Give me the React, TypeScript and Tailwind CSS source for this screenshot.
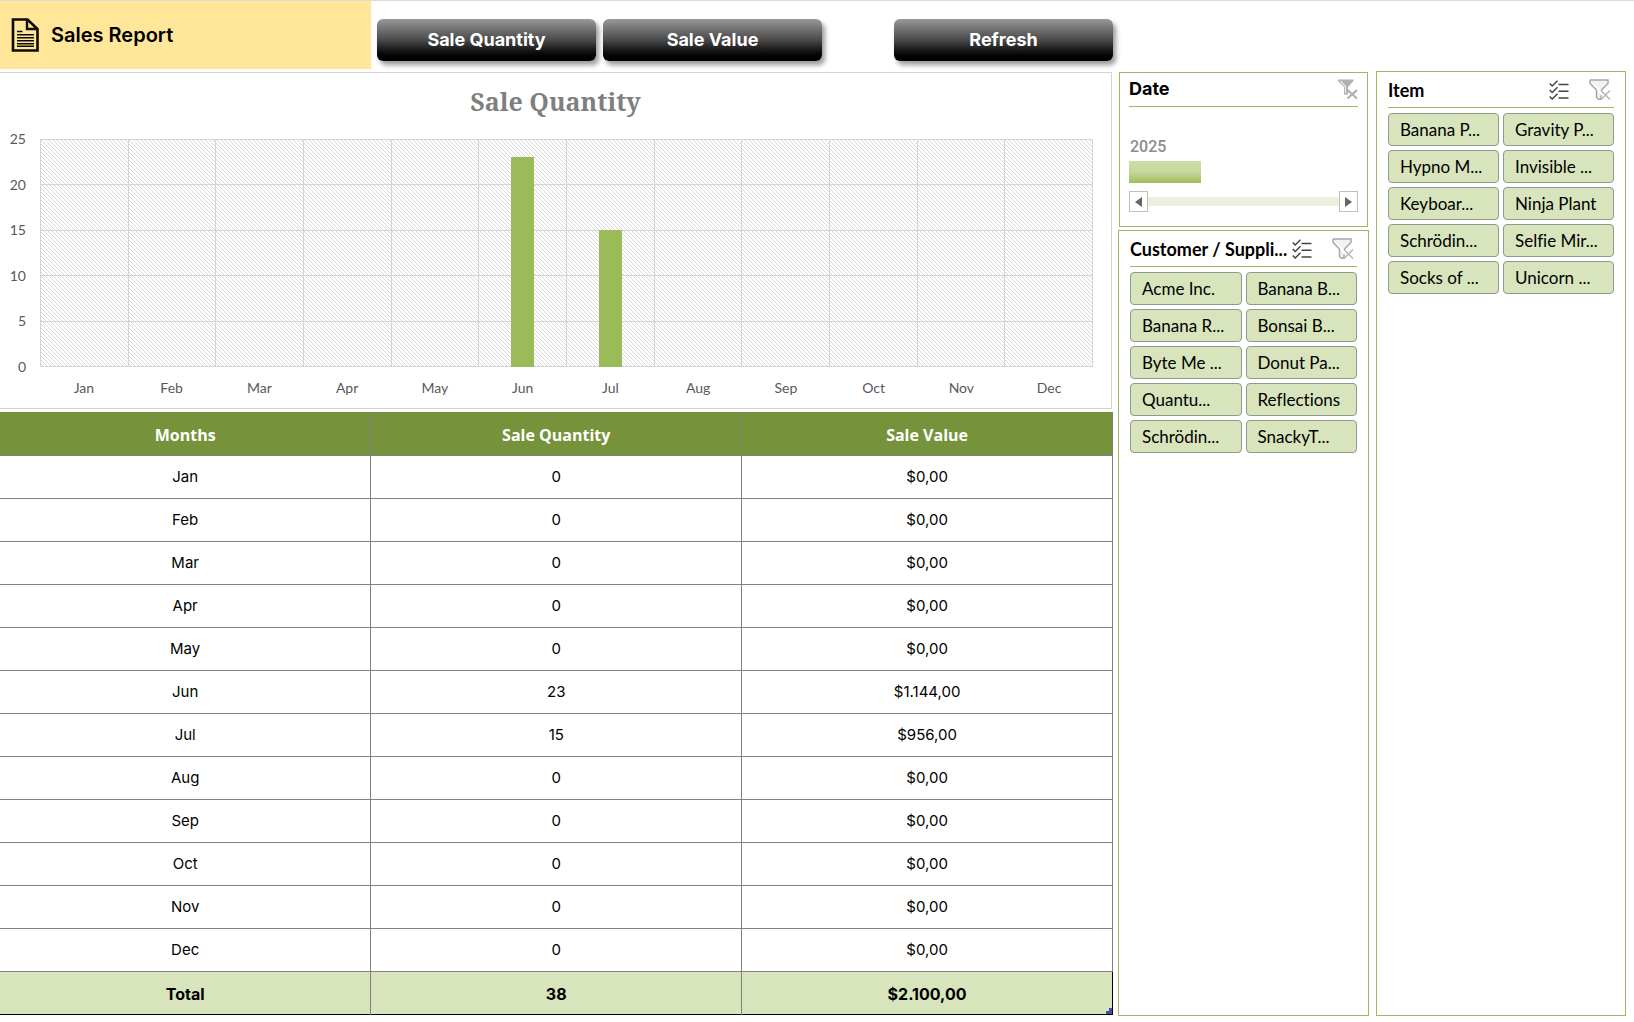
const months = ["Jan", "Feb", "Mar", "Apr", "May", "Jun", "Jul", "Aug", "Sep", "Oct", "Nov", "Dec"];

const sales: Record<string, { quantity: number; value: string }> = {
  Jun: { quantity: 23, value: "$1.144,00" },
  Jul: { quantity: 15, value: "$956,00" },
};

const ticks = [25, 20, 15, 10, 5, 0];

const customers = [
  "Acme Inc.",
  "Banana B...",
  "Banana R...",
  "Bonsai B...",
  "Byte Me ...",
  "Donut Pa...",
  "Quantu...",
  "Reflections",
  "Schrödin...",
  "SnackyT...",
];

const items = [
  "Banana P...",
  "Gravity P...",
  "Hypno M...",
  "Invisible ...",
  "Keyboar...",
  "Ninja Plant",
  "Schrödin...",
  "Selfie Mir...",
  "Socks of ...",
  "Unicorn ...",
];

function ReportIcon() {
  return (
    <svg width="28" height="34" viewBox="0 0 28 34" fill="none" stroke="#0d0a02" aria-hidden="true">
      <path d="M2 1.500h14.500l10 9.500v21.500H2z" strokeWidth="2.600" />
      <path d="M16 1.500V11h10.500" strokeWidth="2.400" />
      <path d="M6 13.500h5.500M6 16.800h17M6 19.800h17M6 22.800h17M6 25.800h17M6 28.300h17" strokeWidth="1.500" />
    </svg>
  );
}

function MultiSelectIcon() {
  return (
    <svg width="20" height="20" viewBox="0 0 20 20" fill="none" stroke="#444" strokeWidth="1.500" aria-hidden="true">
      <path d="M.7 3.500l2.500 2.500L8.500.8M.7 10l2.500 2.500L8.500 7.300M.7 16.500L3.200 19l5.300-5.200" />
      <path d="M9.500 4.500h10M9.500 11.200h10M9.500 18h10" />
    </svg>
  );
}

function ClearFilterIcon() {
  return (
    <svg width="22" height="22" viewBox="0 0 22 22" fill="none" stroke="#a6a6a6" strokeWidth="1.400" aria-hidden="true">
      <path d="M1 1h18v3.500l-6.500 6.500v1M1 1v3.500L7.500 11v7.500l2 1.700h2.500v-4" fill="#f2f2f2" />
      <path d="M12 11.500l9 9M21 11.500l-9 9" stroke="#b3b3b3" />
    </svg>
  );
}

function ClearTimelineIcon() {
  return (
    <svg width="20" height="21" viewBox="0 0 20 21" fill="none" aria-hidden="true">
      <path d="M0 .5h15.500v1.500L10 8v7.500H6V8L0 2z" fill="#b0b0b0" />
      <path d="M2.500 2l5 5.500v6.500" stroke="#eee" strokeWidth="1.200" />
      <path d="M9.500 11l9.500 8.500M19 11l-9.500 8.500" stroke="#b0b0b0" strokeWidth="2.200" />
    </svg>
  );
}

function MacroButton({ label }: { label: string }) {
  return (
    <button
      type="button"
      className="h-[42px] w-[219px] rounded-md bg-linear-to-b from-[#999] via-[#4a4a4a] to-black font-['Inter',sans-serif] text-lg font-bold text-white shadow-[3px_4px_5px_rgba(0,0,0,0.4)]"
    >
      {label}
    </button>
  );
}

function Slicer({ title, options }: { title: string; options: string[] }) {
  return (
    <section className="flex-1 border border-[#a3b565] px-[11px] pt-[2px] font-['Lato',sans-serif] [font-variant-ligatures:none]">
      <header className="flex h-[34px] items-center border-b border-[#a3b565] pb-[2px]">
        <h2 className="min-w-0 flex-1 whitespace-nowrap text-lg font-bold">{title}</h2>
        <button type="button" aria-label="Multi-select">
          <MultiSelectIcon />
        </button>
        <button type="button" aria-label="Clear filter" className="mr-[3px] ml-5">
          <ClearFilterIcon />
        </button>
      </header>
      <div className="mt-[5px] grid grid-cols-2 gap-1">
        {options.map((option) => (
          <button
            key={option}
            type="button"
            className="h-[33px] truncate rounded-sm border border-[#8f9a8a] bg-[#d8e4bc] pl-[11px] text-left text-[17px]"
          >
            {option}
          </button>
        ))}
      </div>
    </section>
  );
}

function Timeline() {
  return (
    <section className="mr-px ml-px h-[155px] border border-[#a3b565] px-[9px]">
      <header className="flex h-[34px] items-center border-b border-[#a3b565]">
        <h2 className="flex-1 pb-[2px] font-['Inter',sans-serif] text-lg font-bold">Date</h2>
        <button type="button" aria-label="Clear filter">
          <ClearTimelineIcon />
        </button>
      </header>
      <p className="mt-[30px] pl-px font-['Roboto',sans-serif] text-base leading-5 font-medium text-[#8c8c8c]">2025</p>
      <button
        type="button"
        aria-label="2025"
        className="mt-1 block h-[22px] w-[72px] bg-linear-to-b from-[#cddfa8] via-[#c5d79b] to-[#a0bd5b]"
      />
      <div className="mt-2 flex items-center">
        <button type="button" aria-label="Scroll left" className="grid h-[21px] w-[19px] place-items-center border border-[#c0c0c0]">
          <svg width="7" height="10" viewBox="0 0 7 10" fill="#666"><path d="M7 0v10L0 5z" /></svg>
        </button>
        <div className="h-[9px] flex-1 bg-[#ebf1de]" />
        <button type="button" aria-label="Scroll right" className="grid h-[21px] w-[19px] place-items-center border border-[#c0c0c0]">
          <svg width="7" height="10" viewBox="0 0 7 10" fill="#666"><path d="M0 0v10l7-5z" /></svg>
        </button>
      </div>
    </section>
  );
}

function Chart() {
  return (
    <section className="mr-px h-[337px] border-y border-r border-[#d4d4d4] pr-[18px] font-['Lato',sans-serif] text-[#595959]">
      <h2 className="pt-[10px] pl-[18px] text-center font-['Noto_Serif','Liberation_Serif',serif] text-[25px] leading-9 font-bold text-[#7f7f7f]">
        Sale Quantity
      </h2>
      <div className="mt-5 flex">
        <div className="-my-[9px] flex w-10 flex-col justify-between pr-[14px] text-right text-sm leading-[18px]">
          {ticks.map((tick) => (
            <span key={tick}>{tick}</span>
          ))}
        </div>
        <div className="relative h-[228px] flex-1">
          <svg className="absolute inset-0 h-full w-full" aria-hidden="true">
            <defs>
              <pattern id="hatch" width="4" height="4" patternUnits="userSpaceOnUse">
                <path d="M-1-1l6 6M-1 3l2 2M3-1l2 2" stroke="#cfcfcf" strokeWidth=".8" />
              </pattern>
            </defs>
            <rect width="100%" height="100%" fill="url(#hatch)" />
          </svg>
          <div className="absolute inset-0 flex flex-col border-t border-[#d4d4d4]">
            {ticks.slice(1).map((tick) => (
              <div key={tick} className="flex-1 border-b border-[#d4d4d4]" />
            ))}
          </div>
          <div className="absolute inset-0 grid grid-cols-12 border-l border-[#d4d4d4]">
            {months.map((month) => (
              <div key={month} className="flex items-end justify-center border-r border-[#d4d4d4]">
                <div
                  className="w-[23px] bg-[#9bbb59]"
                  style={{ height: `${((sales[month]?.quantity ?? 0) / 25) * 100}%` }}
                />
              </div>
            ))}
          </div>
        </div>
      </div>
      <div className="mt-3 ml-10 grid grid-cols-12 text-center text-sm leading-[18px]">
        {months.map((month) => (
          <span key={month}>{month}</span>
        ))}
      </div>
    </section>
  );
}

function SalesTable() {
  return (
    <table className="mt-[3px] w-full table-fixed border-collapse text-center font-['Inter',sans-serif] text-[15px]">
      <thead>
        <tr className="h-[43px] bg-[#76933c] font-['Open_Sans',sans-serif] text-base text-white">
          <th className="border-r border-[#808080] pt-[3px]">Months</th>
          <th className="border-r border-[#808080] pt-[3px]">Sale Quantity</th>
          <th className="border-r border-[#808080] pt-[3px]">Sale Value</th>
        </tr>
      </thead>
      <tbody>
        {months.map((month) => (
          <tr key={month} className="h-[43px] border-y border-[#808080]">
            <td className="border-r border-[#808080] pt-[2px]">{month}</td>
            <td className="border-r border-[#808080] pt-[2px]">{sales[month]?.quantity ?? 0}</td>
            <td className="border-r border-[#808080] pt-[2px]">{sales[month]?.value ?? "$0,00"}</td>
          </tr>
        ))}
      </tbody>
      <tfoot>
        <tr className="h-[43px] border-b border-black bg-[#d8e4bc] text-base font-bold">
          <td className="border-r border-[#808080] pt-[2px]">Total</td>
          <td className="border-r border-[#808080] pt-[2px]">38</td>
          <td className="relative border-r border-black pt-[2px]">
            $2.100,00
            <svg className="absolute right-0 bottom-0" width="6" height="6" viewBox="0 0 6 6" fill="#3f51a5" aria-hidden="true">
              <path d="M3 0h3v6H0V3h3z" />
            </svg>
          </td>
        </tr>
      </tfoot>
    </table>
  );
}

export default function App() {
  return (
    <div className="min-h-screen border-t border-[#dcdcdc] bg-white font-['Roboto',sans-serif] text-black">
      <div className="flex h-[71px] items-start">
        <h1 className="flex h-[68px] w-[371px] items-center gap-3 bg-[#ffe699] pl-[11px] font-['Inter',sans-serif] text-xl font-semibold">
          <ReportIcon />
          Sales Report
        </h1>
        <div className="flex pt-[18px] pl-[6px]">
          <MacroButton label="Sale Quantity" />
          <div className="pl-[7px]">
            <MacroButton label="Sale Value" />
          </div>
          <div className="pl-[72px]">
            <MacroButton label="Refresh" />
          </div>
        </div>
      </div>
      <div className="flex pr-2">
        <main className="min-w-0 flex-1 pb-px">
          <Chart />
          <SalesTable />
        </main>
        <aside className="ml-[5px] flex w-[251px] flex-col gap-[3px]">
          <Timeline />
          <Slicer title="Customer / Suppli..." options={customers} />
        </aside>
        <aside className="-mt-px ml-[7px] flex w-[250px] flex-col">
          <Slicer title="Item" options={items} />
        </aside>
      </div>
    </div>
  );
}
